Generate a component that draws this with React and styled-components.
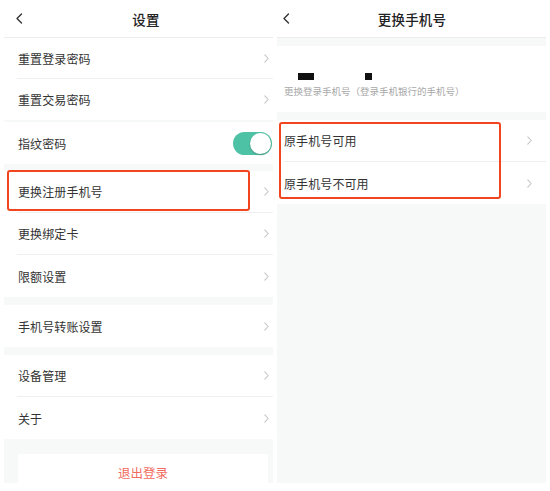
import React from "react";
import styled, { createGlobalStyle } from "styled-components";

const Global = createGlobalStyle`
  html, body { margin: 0; padding: 0; background: #ffffff; }
  body { font-family: "Noto Sans CJK SC", "Noto Sans", sans-serif; }
  * { box-sizing: border-box; }
`;

const Screen = styled.div`
  display: flex;
  gap: 4px;
  padding: 0 4px;
  width: 550px;
  height: 491px;
  background: #ffffff;
`;

const Panel = styled.div`
  width: 269px;
  height: 483px;
  background: #f7f8f8;
  overflow: hidden;
  display: flex;
  flex-direction: column;
`;

const Header = styled.div`
  height: 38px;
  flex: none;
  background: #ffffff;
  border-bottom: 1px solid #ededed;
  display: grid;
  grid-template-columns: 40px 1fr 40px;
  align-items: center;
  padding-left: ${(p) => p.$backInset}px;
`;

const Back = styled.span`
  display: flex;
  align-items: center;
  color: #333;
`;

const Title = styled.div`
  text-align: center;
  font-size: 13.5px;
  font-weight: 500;
  color: #222;
  padding-left: ${(p) => (p.$shift > 0 ? p.$shift : 0)}px;
  padding-right: ${(p) => (p.$shift < 0 ? -p.$shift : 0)}px;
  letter-spacing: 0.2px;
`;

const Group = styled.div`
  background: #ffffff;
  margin-top: ${(p) => p.$gap || 0}px;
  position: relative;
  flex: none;
`;

const Row = styled.div`
  height: ${(p) => p.$h || 42}px;
  display: flex;
  padding-left: ${(p) => p.$inset}px;
`;

const RowInner = styled.div`
  flex: 1;
  display: flex;
  align-items: center;
  justify-content: space-between;
  padding-left: ${(p) => p.$textInset || 0}px;
  padding-right: ${(p) => p.$right}px;
  border-bottom: ${(p) => (p.$last ? "none" : "1px solid #efefef")};
`;

const Label = styled.span`
  font-size: 12px;
  color: #333;
  letter-spacing: 0.1px;
`;

const Switch = styled.span`
  width: 39px;
  height: 23px;
  border-radius: 12px;
  background: #4ec2a4;
  display: flex;
  justify-content: flex-end;
  align-items: center;
  padding: 1px;
  margin-right: -3px;
`;

const Knob = styled.span`
  width: 21px;
  height: 21px;
  border-radius: 50%;
  background: #ffffff;
  box-shadow: 0 1px 2px rgba(0, 0, 0, 0.25);
`;

const Annotation = styled.div`
  position: absolute;
  border: 2px solid #f0451f;
  border-radius: 3px;
  pointer-events: none;
`;

const LogoutCard = styled.div`
  margin: 15px 5px 0 14px;
  height: 36px;
  background: #ffffff;
  display: flex;
  align-items: center;
  justify-content: center;
  font-size: 12.5px;
  color: #f26b60;
  flex: none;
`;

const Info = styled.div`
  height: 66px;
  background: #ffffff;
  margin-top: 8px;
  padding: 27px 7px 0 7px;
  flex: none;
`;

const MaskLine = styled.div`
  height: 7px;
  display: flex;
`;

const Mask = styled.span`
  height: 7px;
  width: ${(p) => p.$w}px;
  margin-left: ${(p) => p.$ml}px;
  background: #111;
`;

const Hint = styled.div`
  margin-top: 5px;
  font-size: 9.5px;
  line-height: 12px;
  color: #a8a8a8;
  white-space: nowrap;
`;

const BackIcon = () => (
  <svg width="9" height="11" viewBox="0 0 9 11">
    <polyline points="6.5,1 2,5.5 6.5,10" fill="none" stroke="#333" strokeWidth="1.4" strokeLinecap="round" strokeLinejoin="round" />
  </svg>
);

const Chevron = () => (
  <svg width="5" height="9" viewBox="0 0 5 9">
    <polyline points="0.8,0.8 4.2,4.5 0.8,8.2" fill="none" stroke="#c6c6c6" strokeWidth="1.1" strokeLinecap="round" strokeLinejoin="round" />
  </svg>
);

const LeftRow = ({ label, last, h, children }) => (
  <Row $inset={13} $h={h}>
    <RowInner $textInset={1} $right={4} $last={last}>
      <Label>{label}</Label>
      {children || <Chevron />}
    </RowInner>
  </Row>
);

const RightRow = ({ label, last }) => (
  <Row $inset={7}>
    <RowInner $right={14} $last={last}>
      <Label>{label}</Label>
      <Chevron />
    </RowInner>
  </Row>
);

export default function App() {
  return (
    <>
      <Global />
      <Screen>
        <Panel>
          <Header $backInset={11}>
            <Back><BackIcon /></Back>
            <Title $shift={4}>设置</Title>
            <span />
          </Header>
          <Group>
            <LeftRow label="重置登录密码" h={41} />
            <LeftRow label="重置交易密码" h={41} last />
          </Group>
          <Group $gap={2}>
            <LeftRow label="指纹密码" last>
              <Switch><Knob /></Switch>
            </LeftRow>
          </Group>
          <Group $gap={7}>
            <LeftRow label="更换注册手机号" />
            <Annotation style={{ left: 3, top: -1, width: 243, height: 41 }} />
            <LeftRow label="更换绑定卡" />
            <LeftRow label="限额设置" last />
          </Group>
          <Group $gap={8}>
            <LeftRow label="手机号转账设置" last />
          </Group>
          <Group $gap={8}>
            <LeftRow label="设备管理" />
            <LeftRow label="关于" last />
          </Group>
          <LogoutCard>退出登录</LogoutCard>
        </Panel>

        <Panel>
          <Header $backInset={5}>
            <Back><BackIcon /></Back>
            <Title $shift={-4}>更换手机号</Title>
            <span />
          </Header>
          <Info>
            <MaskLine>
              <Mask $w={16} $ml={14} />
              <Mask $w={7} $ml={51} />
            </MaskLine>
            <Hint>更换登录手机号（登录手机银行的手机号）</Hint>
          </Info>
          <Group $gap={8}>
            <RightRow label="原手机号可用" />
            <RightRow label="原手机号不可用" last />
            <Annotation style={{ left: 2, top: 2, width: 222, height: 77 }} />
          </Group>
        </Panel>
      </Screen>
    </>
  );
}
